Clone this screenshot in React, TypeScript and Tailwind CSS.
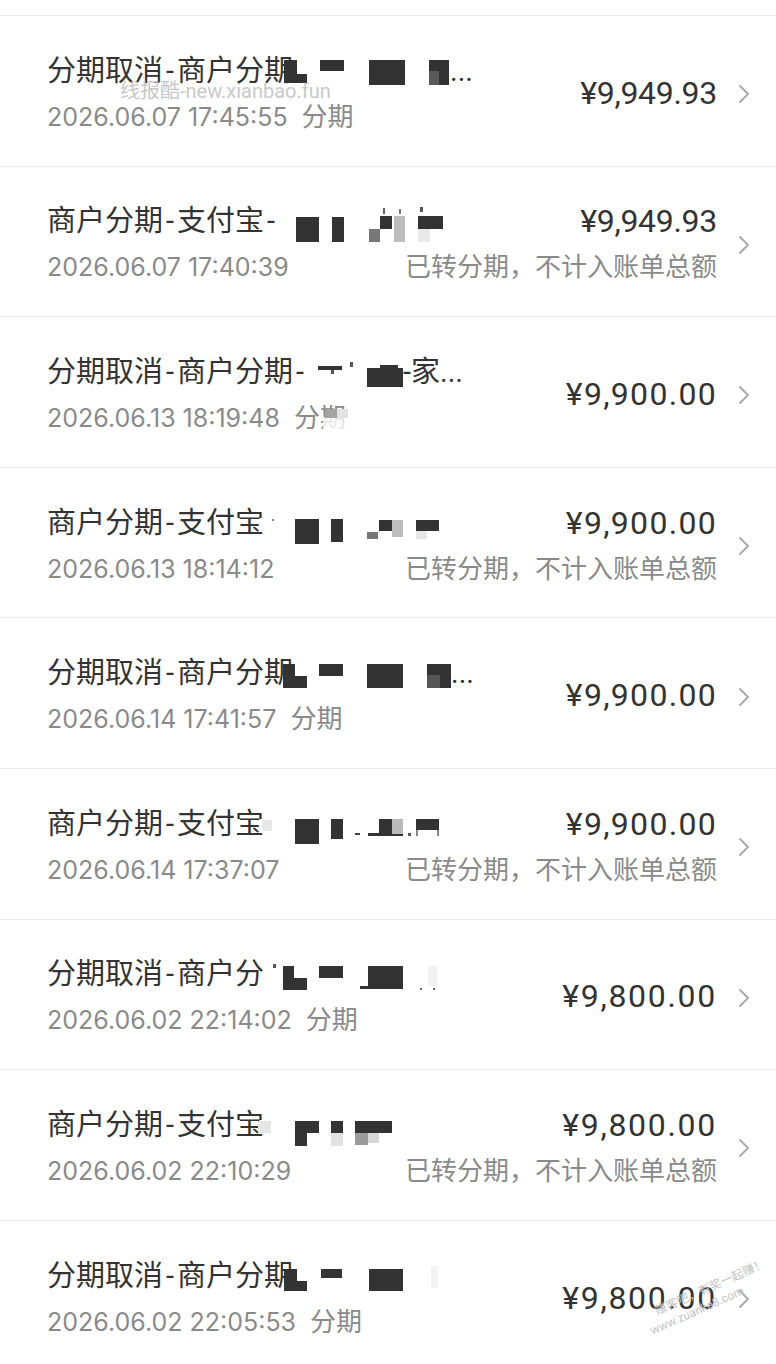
import { FC } from "react";

type Mask = [number, number, number, number, string?];

type Row = {
  title: string;
  tail?: { text: string; x: number };
  masks: Mask[];
  date: string;
  amount: string;
  noted?: boolean;
  dateMasks?: Mask[];
};

const rows: Row[] = [
  {
    title: "分期取消-商户分期",
    tail: { text: "...", x: 403 },
    masks: [[237, 9, 13, 23], [237, 23, 23, 9], [273, 9, 24, 11], [322, 9, 36, 25], [382, 9, 20, 25], [382, 20, 10, 14, "#5a5a5a"]],
    date: "2026.06.07 17:45:55",
    amount: "¥9,949.93",
  },
  {
    title: "商户分期-支付宝-",
    masks: [[249, 16, 23, 25], [285, 16, 12, 25], [322, 28, 11, 13, "#777"], [333, 15, 12, 13], [347, 15, 11, 26, "#bdbdbd"], [371, 15, 25, 13], [371, 28, 12, 13, "#e9e9e9"], [336, 7, 2, 6, "#666"], [352, 8, 2, 5, "#777"], [373, 6, 3, 5, "#555"]],
    date: "2026.06.07 17:40:39",
    amount: "¥9,949.93",
    noted: true,
  },
  {
    title: "分期取消-商户分期-",
    tail: { text: "-家...", x: 356 },
    masks: [[271, 14, 24, 4], [284, 18, 3, 4, "#555"], [303, 10, 3, 5, "#555"], [320, 16, 36, 19], [333, 13, 18, 5]],
    date: "2026.06.13 18:19:48",
    amount: "¥9,900.00",
    dateMasks: [[276, 17, 28, 17, "rgba(255,255,255,0.8)"], [278, 9, 12, 9, "#a3a3a3"], [290, 9, 11, 9, "#e2e2e2"]],
  },
  {
    title: "商户分期-支付宝",
    masks: [[225, 16, 2, 2, "#888"], [248, 16, 24, 25], [284, 16, 12, 23], [320, 29, 11, 7, "#777"], [332, 17, 13, 11], [345, 17, 11, 17, "#bdbdbd"], [369, 17, 23, 11], [369, 28, 11, 8, "#e6e6e6"]],
    date: "2026.06.13 18:14:12",
    amount: "¥9,900.00",
    noted: true,
  },
  {
    title: "分期取消-商户分期",
    tail: { text: "...", x: 404 },
    masks: [[236, 11, 12, 24], [236, 23, 24, 12], [272, 11, 24, 12], [320, 11, 36, 24], [380, 11, 24, 24], [380, 22, 13, 13, "#555"]],
    date: "2026.06.14 17:41:57",
    amount: "¥9,900.00",
  },
  {
    title: "商户分期-支付宝",
    masks: [[215, 16, 10, 11, "#e8e8e8"], [248, 15, 24, 25], [284, 15, 12, 20], [308, 29, 5, 2, "#444"], [321, 29, 35, 3], [332, 15, 13, 15], [345, 15, 11, 15, "#bbb"], [361, 29, 3, 3, "#555"], [369, 15, 23, 11], [369, 26, 2, 6, "#888"], [390, 26, 2, 6, "#888"]],
    date: "2026.06.14 17:37:07",
    amount: "¥9,900.00",
    noted: true,
  },
  {
    title: "分期取消-商户分",
    masks: [[226, 10, 3, 4, "#555"], [236, 12, 11, 24], [236, 24, 24, 12], [272, 12, 24, 12], [321, 12, 35, 20], [313, 32, 43, 3], [381, 12, 9, 20, "#f2f2f2"], [373, 34, 2, 2, "#666"], [386, 34, 2, 2, "#666"]],
    date: "2026.06.02 22:14:02",
    amount: "¥9,800.00",
  },
  {
    title: "商户分期-支付宝",
    masks: [[211, 16, 13, 12, "#e6e6e6"], [248, 16, 24, 12], [248, 16, 12, 25], [284, 16, 12, 12], [284, 28, 12, 13, "#e2e2e2"], [308, 16, 37, 12], [308, 28, 13, 12, "#9a9a9a"], [321, 28, 11, 10, "#d8d8d8"]],
    date: "2026.06.02 22:10:29",
    amount: "¥9,800.00",
    noted: true,
  },
  {
    title: "分期取消-商户分期",
    masks: [[237, 13, 13, 22], [237, 25, 23, 10], [274, 13, 21, 9], [322, 13, 34, 22], [384, 10, 7, 22, "#f3f3f3"]],
    date: "2026.06.02 22:05:53",
    amount: "¥9,800.00",
  },
];

const amountTracking: Record<string, string> = {
  "¥9,949.93": "tracking-[-0.3px]",
  "¥9,900.00": "tracking-[1.3px]",
  "¥9,800.00": "tracking-[1.7px]",
};

const Masks: FC<{ masks: Mask[] }> = ({ masks }) => (
  <>
    {masks.map(([x, y, w, h, c], i) => (
      <span
        key={i}
        className="absolute"
        style={{ left: x, top: y, width: w, height: h, background: c ?? "#333" }}
      />
    ))}
  </>
);

const Chevron = () => (
  <svg width="12" height="20" viewBox="0 0 12 20" className="ml-[21px] mt-[3px] shrink-0">
    <polyline points="2,2 10,10 2,18" fill="none" stroke="#ababab" strokeWidth="2" strokeLinecap="round" strokeLinejoin="round" />
  </svg>
);

const Amount: FC<{ value: string }> = ({ value }) => (
  <span className={`whitespace-nowrap text-[32px] leading-[40px] text-[#333] ${amountTracking[value]}`}>{value}</span>
);

const Item: FC<{ row: Row; index: number }> = ({ row, index }) => (
  <div className="relative flex h-[150.6px] items-center border-t border-[#ececec] pl-[47px] pr-[26px] pt-[4px]">
    <div className="flex min-w-0 flex-1 flex-col gap-[8px]">
      <div className="flex h-[40px] items-center justify-between">
        <div className="relative h-[40px] whitespace-nowrap text-[29px] leading-[40px] text-[#333]">
          {row.title.split("-").map((part, i) => (
            <span key={i}>
              {i > 0 && <span className="mx-[3px]">-</span>}
              {part}
            </span>
          ))}
          <Masks masks={row.masks} />
          {row.tail && (
            <span className="absolute top-0" style={{ left: row.tail.x }}>
              {row.tail.text}
            </span>
          )}
        </div>
        {row.noted && <Amount value={row.amount} />}
      </div>
      <div className="flex h-[36px] items-center justify-between text-[26px] leading-[36px] text-[#8a8a8a]">
        <div className="relative whitespace-nowrap">
          <span className="font-[Inter,'Noto_Sans_CJK_SC',sans-serif] text-[25px]">{row.date}</span>
          {!row.noted && <span className="ml-[14px]">分期</span>}
          {row.dateMasks && <Masks masks={row.dateMasks} />}
        </div>
        {row.noted && <span className="whitespace-nowrap">已转分期，不计入账单总额</span>}
      </div>
    </div>
    {!row.noted && <Amount value={row.amount} />}
    <Chevron />

    {index === 0 && (
      <span className="absolute left-[120px] top-[63px] text-[20px] leading-[24px] text-[#c9c9c9]">
        线报酷-new.xianbao.fun
      </span>
    )}
    {index === 8 && (
      <div className="absolute left-[642px] top-[60px] rotate-[-24deg] whitespace-nowrap text-[12px] leading-[16px] text-[#c4c4c4]">
        <div className="pl-[12px]">赚客吧，有奖一起赚！</div>
        <div>www.zuanke8.com</div>
      </div>
    )}
  </div>
);

export default function App() {
  return (
    <div className="h-[1364px] w-[776px] overflow-hidden bg-white font-[Roboto,'Noto_Sans_CJK_SC',sans-serif]">
      <div className="h-[15px]" />
      {rows.map((row, i) => (
        <Item key={i} row={row} index={i} />
      ))}
    </div>
  );
}
